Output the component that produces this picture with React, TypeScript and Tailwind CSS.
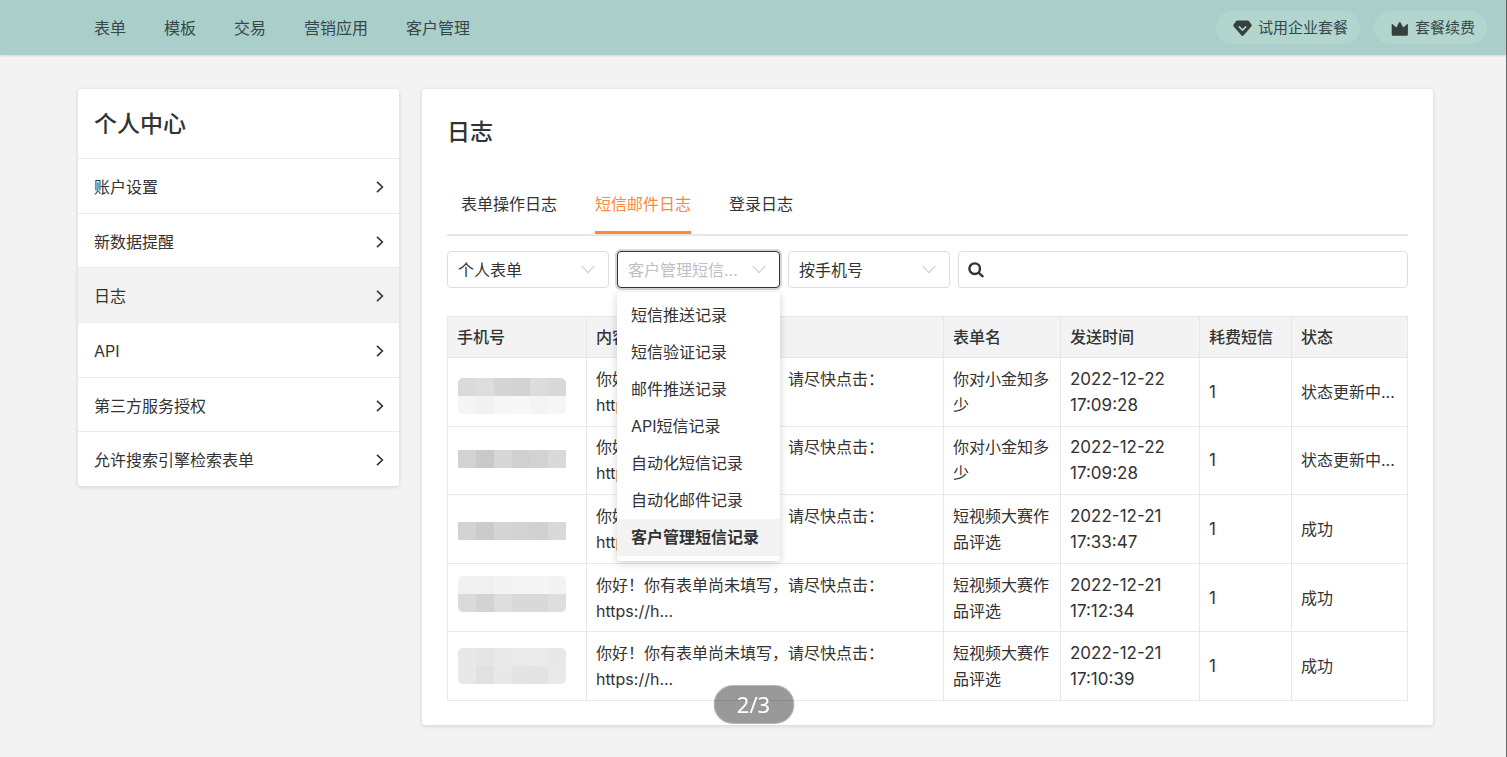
import React from "react";

const navItems = ["表单", "模板", "交易", "营销应用", "客户管理"];

const sideItems = ["账户设置", "新数据提醒", "日志", "API", "第三方服务授权", "允许搜索引擎检索表单"];

const tabs = ["表单操作日志", "短信邮件日志", "登录日志"];

const recordTypes = [
  "短信推送记录",
  "短信验证记录",
  "邮件推送记录",
  "API短信记录",
  "自动化短信记录",
  "自动化邮件记录",
  "客户管理短信记录",
];

// each mask is a list of [y, colours of the six blocks]
type Mask = [number, string[]][];

const rows: { mask: Mask; form: string; date: string; time: string; status: string }[] = [
  {
    mask: [
      [18, ["#dadada", "#dddddd", "#d5d5d5", "#d2d2d2", "#dcdcdc", "#d8d8d8"]],
      [36, ["#f5f5f5", "#f1f1f1", "#f6f6f6", "#f7f7f7", "#f4f4f4", "#f6f6f6"]],
    ],
    form: "你对小金知多少",
    date: "2022-12-22",
    time: "17:09:28",
    status: "状态更新中...",
  },
  {
    mask: [[22, ["#d2d2d2", "#c9c9c9", "#d7d7d7", "#d0d0d0", "#d2d2d2", "#d9d9d9"]]],
    form: "你对小金知多少",
    date: "2022-12-22",
    time: "17:09:28",
    status: "状态更新中...",
  },
  {
    mask: [[25, ["#d3d3d3", "#cbcbcb", "#d5d5d5", "#d2d2d2", "#d1d1d1", "#d9d9d9"]]],
    form: "短视频大赛作品评选",
    date: "2022-12-21",
    time: "17:33:47",
    status: "成功",
  },
  {
    mask: [
      [10, ["#f1f1f1", "#f0f0f0", "#f3f3f3", "#f4f4f4", "#f5f5f5", "#f3f3f3"]],
      [28, ["#dadada", "#d3d3d3", "#dddddd", "#d8dada", "#d9d9d9", "#dedede"]],
    ],
    form: "短视频大赛作品评选",
    date: "2022-12-21",
    time: "17:12:34",
    status: "成功",
  },
  {
    mask: [
      [14, ["#e8e8e8", "#e5e5e5", "#e9e9e9", "#eaeaea", "#eaeaea", "#e8e8e8"]],
      [32, ["#e8e8e8", "#e1e1e1", "#e8e8e8", "#e4e4e4", "#e3e3e3", "#e9e9e9"]],
    ],
    form: "短视频大赛作品评选",
    date: "2022-12-21",
    time: "17:10:39",
    status: "成功",
  },
];

const MaskedPhone = ({ mask, id }: { mask: Mask; id: string }) => {
  const top = mask[0][0];
  return (
    <svg className="block" width="108" height="64" viewBox="0 0 108 64" aria-hidden="true">
      <clipPath id={id}>
        <rect x="0" y={top} width="108" height={mask.length * 18} rx={mask.length > 1 ? 5 : 0} />
      </clipPath>
      <g clipPath={`url(#${id})`} shapeRendering="crispEdges">
        {mask.map(([y, colors]) =>
          colors.map((color, i) => <rect key={`${y}-${i}`} x={i * 18} y={y} width="18" height="18" fill={color} />)
        )}
      </g>
    </svg>
  );
};

const Select = ({ label, options, open = false }: { label: string; options: string[]; open?: boolean }) => (
  <div className={"relative shrink-0 " + (open ? "w-[163px]" : "w-[162px]")}>
    <select
      aria-label={label}
      defaultValue={options[options.length - 1]}
      className={
        "block h-[37px] w-full appearance-none truncate rounded-[4px] border bg-white pl-[10px] pr-[40px] text-base outline-none " +
        (open
          ? "border-[#333] text-[#bfbfbf] shadow-[0_0_0_2px_rgba(51,51,51,0.2)]"
          : "border-[#dedede] text-[#333]")
      }
    >
      {options.map((option) => (
        <option key={option}>{option}</option>
      ))}
    </select>
    <svg
      className="pointer-events-none absolute right-[14px] top-[14px]"
      width="14"
      height="9"
      viewBox="0 0 14 9"
      fill="none"
      stroke="#cfcfcf"
      strokeWidth="1.2"
      aria-hidden="true"
    >
      <path d="M.7.8 7 7.6 13.3.8" />
    </svg>
    {open && (
      <ul
        role="listbox"
        aria-label={label}
        className="absolute inset-x-0 top-[41px] z-10 rounded-[4px] bg-white py-[5px] shadow-[0_2px_8px_rgba(0,0,0,0.18)]"
      >
        {options.map((option, i) => {
          const selected = i === options.length - 1;
          return (
            <li
              key={option}
              role="option"
              aria-selected={selected}
              className={
                "h-[37px] whitespace-nowrap px-[14px] text-base leading-[37px] " +
                (selected ? "bg-[#f3f3f3] font-bold" : "")
              }
            >
              {option}
            </li>
          );
        })}
      </ul>
    )}
  </div>
);

const Header = () => (
  <header className="flex h-[55px] items-center justify-between bg-[#aacfcb] pl-[94px] pr-[19px] text-[#36474a] shadow-[0_1px_2px_rgba(0,0,0,0.12)]">
    <nav className="flex gap-[38px] text-base">
      {navItems.map((item) => (
        <a key={item} href="#">
          {item}
        </a>
      ))}
    </nav>
    <div className="flex gap-[14px] text-[15px]">
      <button className="flex h-[33px] items-center gap-[6px] rounded-full bg-[#b2d5ce] pl-[17px] pr-[12px] pt-[2px]">
        <svg width="19" height="17" viewBox="0 0 19 17" fill="#36403d" aria-hidden="true">
          <path d="M4.300.6h10.400c.5 0 1 .2 1.300.6l2.400 3.400c.4.600.4 1.400-.1 2l-7.800 9c-.5.6-1.500.6-2 0L.7 6.600C.2 6 .2 5.200.6 4.600L3 1.200c.3-.4.8-.6 1.300-.6Z" />
          <path d="m6.300 6.900 3.200 3.200 3.200-3.200" fill="none" stroke="#b2d5ce" strokeWidth="1.500" strokeLinecap="round" />
        </svg>
        试用企业套餐
      </button>
      <button className="flex h-[33px] items-center gap-[6px] rounded-full bg-[#b2d5ce] pl-[17px] pr-[12px] pt-[2px]">
        <svg width="18" height="16" viewBox="0 0 18 16" fill="#36403d" aria-hidden="true">
          <path d="M1.600 3.200 5.300 6.600 8.400 1.100c.2-.3.600-.3.800 0l3.100 5.500 3.700-3.400c.4-.3.900-.1.900.4v9.800c0 .8-.6 1.400-1.400 1.400H2.100c-.8 0-1.400-.6-1.400-1.400V3.600c0-.5.500-.7.900-.4Z" />
        </svg>
        套餐续费
      </button>
    </div>
  </header>
);

const Sidebar = () => (
  <aside className="flex min-h-[397px] w-[321px] shrink-0 flex-col rounded-[3px] bg-white shadow-[0_1px_4px_rgba(0,0,0,0.14)]">
    <h2 className="border-b border-[#ebebeb] px-4 pb-[19px] pt-5 text-[23px] font-medium leading-[30px]">个人中心</h2>
    <ul className="flex flex-1 flex-col">
      {sideItems.map((item) => (
        <li
          key={item}
          className={"flex flex-1 border-b border-[#ebebeb] last:border-b-0 " + (item === "日志" ? "bg-[#f3f3f3]" : "")}
        >
          <a href="#" className="flex flex-1 items-center justify-between pb-3 pl-4 pr-[15px] pt-[14px] leading-6">
            {item}
            <svg width="8" height="12" viewBox="0 0 8 12" fill="none" stroke="#333" strokeWidth="1.600" aria-hidden="true">
              <path d="m1 .8 5.400 5.200L1 11.200" />
            </svg>
          </a>
        </li>
      ))}
    </ul>
  </aside>
);

const LogTable = () => {
  const th = "border border-[#e8e8e8] px-[9px] py-[7px] text-left font-medium";
  const td = "border border-[#e8e8e8] px-[9px] py-[7px] align-middle";
  return (
    <table className="mt-7 h-[385px] w-full table-fixed border-collapse text-base leading-[26px]">
      <colgroup>
        <col className="w-[139px]" />
        <col />
        <col className="w-[117px]" />
        <col className="w-[139px]" />
        <col className="w-[92px]" />
        <col className="w-[116px]" />
      </colgroup>
      <thead>
        <tr className="bg-[#f3f3f3]">
          {["手机号", "内容", "表单名", "发送时间", "耗费短信", "状态"].map((title) => (
            <th key={title} className={th}>
              {title}
            </th>
          ))}
        </tr>
      </thead>
      <tbody>
        {rows.map((row, i) => (
          <tr key={i}>
            <td className="border border-[#e8e8e8] px-[10px] py-0">
              <MaskedPhone mask={row.mask} id={`mask-${i}`} />
            </td>
            <td className={td}>
              你好！你有表单尚未填写，请尽快点击：
              <br />
              https://h...
            </td>
            <td className={td}>{row.form}</td>
            <td className={td + " text-[17px]"}>
              {row.date}
              <br />
              {row.time}
            </td>
            <td className={td + " text-[17px]"}>1</td>
            <td className={td + " whitespace-nowrap"}>{row.status}</td>
          </tr>
        ))}
      </tbody>
    </table>
  );
};

const App = () => (
  <div
    lang="zh-CN"
    className="min-h-screen border-r border-[#666] bg-[#f3f3f3] font-['Inter','Noto_Sans_CJK_SC',sans-serif] text-base text-[#333]"
  >
    <Header />
    <div className="flex items-start gap-[23px] pb-8 pl-[78px] pr-[73px] pt-[34px]">
      <Sidebar />
      <main className="min-w-0 flex-1 rounded-[3px] bg-white px-[25px] pb-6 pt-7 shadow-[0_1px_4px_rgba(0,0,0,0.14)]">
        <h1 className="text-[23px] font-medium leading-[30px]">日志</h1>
        <nav className="mt-[45px] flex gap-[38px] border-b-2 border-[#e6e6e6] pl-[14px] leading-6">
          {tabs.map((tab, i) => (
            <a
              key={tab}
              href="#"
              className={
                "border-b-3 pb-[15px] " + (i === 1 ? "border-[#ff8839] text-[#ff8839]" : "border-transparent")
              }
            >
              {tab}
            </a>
          ))}
        </nav>
        <div className="mt-[15px] flex gap-2">
          <Select label="表单类型" options={["个人表单"]} />
          <Select label="记录类型" options={recordTypes} open />
          <Select label="查询方式" options={["按手机号"]} />
          <div className="relative min-w-0 flex-1">
            <svg
              className="absolute left-[10px] top-[11px]"
              width="16"
              height="16"
              viewBox="0 0 16 16"
              fill="none"
              stroke="#333"
              strokeWidth="2.400"
              aria-hidden="true"
            >
              <circle cx="6.700" cy="6.700" r="5.300" />
              <path d="m10.600 10.600 4.600 4.400" />
            </svg>
            <input
              type="text"
              aria-label="搜索"
              className="block h-[37px] w-full rounded-[4px] border border-[#dedede] bg-white pl-9 pr-3 outline-none"
            />
          </div>
        </div>
        <LogTable />
      </main>
    </div>
    <div className="fixed bottom-[33px] left-1/2 z-20 flex h-[39px] w-[81px] -translate-x-1/2 items-center justify-center rounded-full border border-white/30 bg-black/40 font-['Noto_Sans',sans-serif] text-[22px] text-white">
      2/3
    </div>
  </div>
);

export default App;
